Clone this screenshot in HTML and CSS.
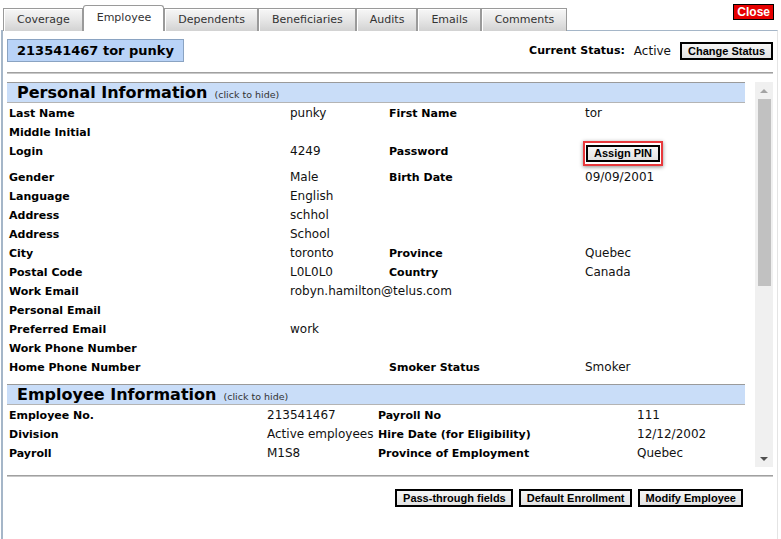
FILE: index.html
```html
<!DOCTYPE html>
<html>
<head>
<meta charset="utf-8">
<link rel="stylesheet" href="styles.css">
</head>
<body>
<div class="topbar">
  <div class="tabs">
    <div class="tab">Coverage</div>
    <div class="tab active">Employee</div>
    <div class="tab">Dependents</div>
    <div class="tab">Beneficiaries</div>
    <div class="tab">Audits</div>
    <div class="tab">Emails</div>
    <div class="tab">Comments</div>
  </div>
  <div class="close">Close</div>
</div>
<div class="panel">
  <div class="head">
    <div class="who">213541467 tor punky</div>
    <div class="status">
      <span class="status-label">Current Status:</span>
      <span class="status-value">Active</span>
      <span class="btn">Change Status</span>
    </div>
  </div>
  <div class="sep"></div>
  <div class="scroller">
    <div class="scroll-content">
      <div class="sec-head"><span class="sec-title">Personal Information</span> <span class="sec-hint">(click to hide)</span></div>
      <div class="rows personal">
        <div class="row"><span class="lbl">Last Name</span><span class="val">punky</span><span class="lbl">First Name</span><span class="val">tor</span></div>
        <div class="row"><span class="lbl">Middle Initial</span><span class="val"></span><span class="lbl"></span><span class="val"></span></div>
        <div class="row tall"><span class="lbl">Login</span><span class="val">4249</span><span class="lbl">Password</span><span class="val"><span class="hl"><span class="btn">Assign PIN</span></span></span></div>
        <div class="row"><span class="lbl">Gender</span><span class="val">Male</span><span class="lbl">Birth Date</span><span class="val">09/09/2001</span></div>
        <div class="row"><span class="lbl">Language</span><span class="val">English</span><span class="lbl"></span><span class="val"></span></div>
        <div class="row"><span class="lbl">Address</span><span class="val">schhol</span><span class="lbl"></span><span class="val"></span></div>
        <div class="row"><span class="lbl">Address</span><span class="val">School</span><span class="lbl"></span><span class="val"></span></div>
        <div class="row"><span class="lbl">City</span><span class="val">toronto</span><span class="lbl">Province</span><span class="val">Quebec</span></div>
        <div class="row"><span class="lbl">Postal Code</span><span class="val">L0L0L0</span><span class="lbl">Country</span><span class="val">Canada</span></div>
        <div class="row"><span class="lbl">Work Email</span><span class="val wide">robyn.hamilton@telus.com</span></div>
        <div class="row"><span class="lbl">Personal Email</span><span class="val"></span><span class="lbl"></span><span class="val"></span></div>
        <div class="row"><span class="lbl">Preferred Email</span><span class="val">work</span><span class="lbl"></span><span class="val"></span></div>
        <div class="row"><span class="lbl">Work Phone Number</span><span class="val"></span><span class="lbl"></span><span class="val"></span></div>
        <div class="row"><span class="lbl">Home Phone Number</span><span class="val"></span><span class="lbl">Smoker Status</span><span class="val">Smoker</span></div>
      </div>
      <div class="sec-head second"><span class="sec-title">Employee Information</span> <span class="sec-hint">(click to hide)</span></div>
      <div class="rows employee">
        <div class="row"><span class="lbl">Employee No.</span><span class="val">213541467</span><span class="lbl">Payroll No</span><span class="val">111</span></div>
        <div class="row"><span class="lbl">Division</span><span class="val">Active employees</span><span class="lbl">Hire Date (for Eligibility)</span><span class="val">12/12/2002</span></div>
        <div class="row"><span class="lbl">Payroll</span><span class="val">M1S8</span><span class="lbl">Province of Employment</span><span class="val">Quebec</span></div>
        <div class="row"><span class="lbl"></span><span class="val">201456999</span><span class="lbl"></span><span class="val">5</span></div>
      </div>
    </div>
    <div class="scrollbar">
      <div class="arrow up"></div>
      <div class="thumb"></div>
      <div class="spacer"></div>
      <div class="arrow down"></div>
    </div>
  </div>
  <div class="sep bottom"></div>
  <div class="actions">
    <span class="btn">Pass-through fields</span>
    <span class="btn">Default Enrollment</span>
    <span class="btn">Modify Employee</span>
  </div>
</div>
</body>
</html>
```

FILE: styles.css
```css
* { box-sizing: border-box; }
html, body { margin: 0; padding: 0; background: #fff; }
body {
  width: 781px;
  height: 539px;
  overflow: hidden;
  font-family: "DejaVu Sans", Verdana, sans-serif;
  color: #000;
}

.topbar {
  display: flex;
  align-items: flex-start;
  height: 30px;
}
.tabs {
  display: flex;
  align-items: flex-end;
  padding-left: 3px;
  height: 31px;
  position: relative;
  z-index: 1;
}
.tab {
  height: 23px;
  line-height: 21px;
  padding: 0 12px 0 13px;
  font-size: 11px;
  color: #333;
  border: 1px solid #9a9a9a;
  border-bottom: none;
  background: linear-gradient(#f7f7f7, #e6e6e6 50%, #d2d2d2);
  box-shadow: inset 1px 1px 0 #fff;
  white-space: nowrap;
}
.tab.active {
  height: 26px;
  line-height: 24px;
  background: #fff;
  box-shadow: none;
  border-radius: 3px 3px 0 0;
  border-color: #9a9a9a;
}
.close {
  margin-left: auto;
  margin-right: 7px;
  margin-top: 4px;
  background: #e60000;
  color: #fff;
  font-family: "Liberation Sans", Arial, sans-serif;
  font-weight: bold;
  font-size: 12px;
  line-height: 14px;
  padding: 0 3px;
  border: 1px solid #000;
}

.panel {
  margin-left: 1px;
  margin-right: 3px;
  height: 509px;
  border-left: 2px solid #a5b6c8;
  border-top: 1px solid #a5b6c8;
  border-right: 1px solid #e4e4e4;
  padding: 0 4px 0 4px;
}

.head {
  display: flex;
  justify-content: space-between;
  align-items: center;
  margin-top: 8px;
  height: 23px;
}
.who {
  background: #b9d3f7;
  border: 1px solid #8aa3c2;
  font-weight: bold;
  font-size: 13px;
  line-height: 21px;
  padding: 0 9px;
  color: #000;
}
.status {
  display: flex;
  align-items: center;
}
.status-label {
  font-weight: bold;
  font-size: 11px;
}
.status-value {
  font-size: 12px;
  margin-left: 9px;
  margin-right: 9px;
  color: #111;
}

.btn {
  display: inline-block;
  font-family: "Liberation Sans", Arial, sans-serif;
  font-weight: bold;
  font-size: 11px;
  line-height: 14px;
  height: 18px;
  padding: 0 6px;
  border: 2px solid #000;
  background: linear-gradient(#f6f6f6, #e2e2e2);
  color: #000;
  white-space: nowrap;
}

.sep {
  margin-top: 10px;
  height: 2px;
  border-top: 1px solid #a0a0a0;
  border-bottom: 1px solid #c8c8c8;
}
.sep.bottom {
  margin-top: 8px;
}

.scroller {
  display: flex;
  margin-top: 8px;
  height: 385px;
}
.scroll-content {
  width: 738px;
  overflow: hidden;
}
.scrollbar {
  margin-left: 10px;
  width: 18px;
  background: #f0f0f0;
  display: flex;
  flex-direction: column;
  align-items: center;
}
.arrow {
  height: 17px;
  width: 18px;
  display: flex;
  align-items: center;
  justify-content: center;
}
.arrow::before {
  content: "";
  width: 0;
  height: 0;
  border-left: 4px solid transparent;
  border-right: 4px solid transparent;
}
.arrow.up::before { border-bottom: 4px solid #a3a3a3; }
.arrow.down::before { border-top: 4px solid #505050; }
.thumb {
  width: 13px;
  height: 187px;
  margin-left: 1px;
  background: #c1c1c1;
}
.spacer { flex: 1; }

.sec-head {
  height: 21px;
  background: #c9ddf8;
  border-top: 1px solid #9a9a9a;
  border-bottom: 1px solid #b4b4b4;
  padding-left: 10px;
  margin-bottom: 1px;
  line-height: 19px;
  white-space: nowrap;
}
.sec-head.second { margin-top: 7px; }
.sec-title {
  font-weight: bold;
  font-size: 16px;
  color: #000;
}
.sec-hint {
  font-size: 9.5px;
  color: #333;
  margin-left: 2px;
}

.row {
  display: grid;
  height: 19px;
  line-height: 19px;
  white-space: nowrap;
}
.personal .row { grid-template-columns: 283px 97px 198px 1fr; }
.employee .row { grid-template-columns: 260px 109px 261px 1fr; }
.row.tall { height: 26px; }
.lbl {
  font-weight: bold;
  font-size: 11px;
  padding-left: 2px;
  color: #000;
}
.val {
  font-size: 12px;
  color: #111;
}
.val.wide { grid-column: 2 / 5; }

.hl {
  display: inline-block;
  margin-top: -1px;
  margin-left: -2px;
  border: 2px solid #e8383c;
  padding: 2px 1px 2px 1px;
  line-height: 0;
  box-shadow: 0 1px 4px rgba(0,0,0,0.45);
}
.hl .btn {
  height: 17px;
  line-height: 13px;
  padding: 0 6px;
}

.actions {
  display: flex;
  justify-content: flex-end;
  gap: 6px;
  margin-top: 12px;
  padding-right: 30px;
}
.actions .btn {
  padding: 0 5px 0 6px;
}
```
